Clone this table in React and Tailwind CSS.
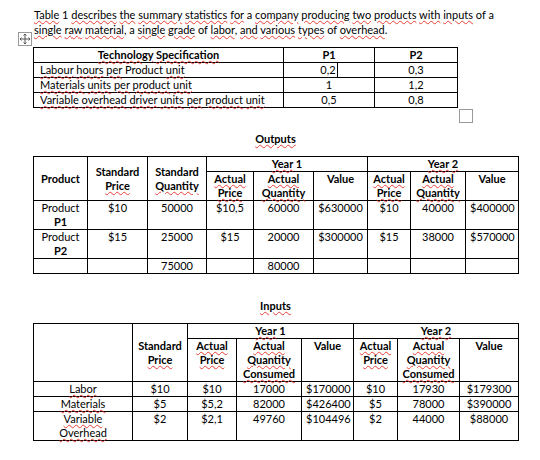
import React from "react";

// words Word's spell checker did not flag
const OK = new Set(["1", "a", "of", "Product", "Standard", "Value", "P1", "P2"]);

function Sp({ t }) {
  return t.split(/(\s+|[.,])/).map((w, i) => {
    if (!w || /^\s+$/.test(w) || /^[.,]$/.test(w) || OK.has(w)) return w;
    return (
      <span
        key={i}
        className="underline decoration-wavy decoration-[#e8403a] decoration-1 underline-offset-[1px]"
      >
        {w}
      </span>
    );
  });
}

const td = "border border-black p-0 px-[4px] leading-[14px] align-top text-center whitespace-nowrap";
const th = "border border-black p-0 px-[2px] leading-[14px] font-bold text-center whitespace-nowrap";

function MoveHandle() {
  return (
    <div className="absolute left-[-15px] top-[-15px] w-[14px] h-[14px] border border-[#9a9a9a] bg-white flex items-center justify-center">
      <svg width="12" height="12" viewBox="0 0 12 12" fill="none" stroke="#555" strokeWidth="1">
        <path d="M6 1v10M1 6h10" />
        <path d="M4.5 2.5L6 1l1.5 1.5M4.5 9.5L6 11l1.5-1.5M2.5 4.5L1 6l1.5 1.5M9.5 4.5L11 6l-1.5 1.5" />
      </svg>
    </div>
  );
}

function Outputs() {
  const rows = [
    ["P1", "$10", "50000", "$10,5", "60000", "$630000", "$10", "40000", "$400000"],
    ["P2", "$15", "25000", "$15", "20000", "$300000", "$15", "38000", "$570000"],
  ];
  return (
    <table className="ml-[33px] w-[485px] table-fixed border-collapse">
      <colgroup>
        <col className="w-[54px]" />
        <col className="w-[60px]" />
        <col className="w-[59px]" />
        <col className="w-[47px]" />
        <col className="w-[60px]" />
        <col className="w-[54px]" />
        <col className="w-[43px]" />
        <col className="w-[55px]" />
        <col className="w-[53px]" />
      </colgroup>
      <thead>
        <tr>
          <th rowSpan={2} className={th + " align-middle"}>Product</th>
          <th rowSpan={2} className={th + " align-middle"}>
            Standard<br />
            <Sp t="Price" />
          </th>
          <th rowSpan={2} className={th + " align-middle"}>
            Standard<br />
            <Sp t="Quantity" />
          </th>
          <th colSpan={3} className={th}>
            <Sp t="Year 1" />
          </th>
          <th colSpan={3} className={th}>
            <Sp t="Year 2" />
          </th>
        </tr>
        <tr>
          {[0, 1].map((k) => (
            <React.Fragment key={k}>
              <th className={th + " align-top"}>
                <Sp t="Actual" />
                <br />
                <Sp t="Price" />
              </th>
              <th className={th + " align-top"}>
                <Sp t="Actual" />
                <br />
                <Sp t="Quantity" />
              </th>
              <th className={th + " align-top"}>Value</th>
            </React.Fragment>
          ))}
        </tr>
      </thead>
      <tbody>
        {rows.map((r) => (
          <tr key={r[0]}>
            <td className={td}>
              Product
              <br />
              <b>{r[0]}</b>
            </td>
            {r.slice(1).map((v, i) => (
              <td key={i} className={td}>
                {v}
              </td>
            ))}
          </tr>
        ))}
        <tr>
          <td className={td}>&nbsp;</td>
          <td className={td}></td>
          <td className={td}>75000</td>
          <td className={td}></td>
          <td className={td}>80000</td>
          <td className={td}></td>
          <td className={td}></td>
          <td className={td}></td>
          <td className={td}></td>
        </tr>
      </tbody>
    </table>
  );
}

function Inputs() {
  const rows = [
    [["Labor"], "$10", "$10", "17000", "$170000", "$10", "17930", "$179300"],
    [["Materials"], "$5", "$5,2", "82000", "$426400", "$5", "78000", "$390000"],
    [["Variable", "Overhead"], "$2", "$2,1", "49760", "$104496", "$2", "44000", "$88000"],
  ];
  return (
    <table className="ml-[33px] w-[485px] table-fixed border-collapse">
      <colgroup>
        <col className="w-[99px]" />
        <col className="w-[55px]" />
        <col className="w-[49px]" />
        <col className="w-[65px]" />
        <col className="w-[52px]" />
        <col className="w-[44px]" />
        <col className="w-[62px]" />
        <col className="w-[59px]" />
      </colgroup>
      <thead>
        <tr>
          <th rowSpan={2} className={th}></th>
          <th rowSpan={2} className={th + " align-middle"}>
            Standard<br />
            <Sp t="Price" />
          </th>
          <th colSpan={3} className={th}>
            <Sp t="Year 1" />
          </th>
          <th colSpan={3} className={th}>
            <Sp t="Year 2" />
          </th>
        </tr>
        <tr>
          {[0, 1].map((k) => (
            <React.Fragment key={k}>
              <th className={th + " align-top"}>
                <Sp t="Actual" />
                <br />
                <Sp t="Price" />
              </th>
              <th className={th + " align-top"}>
                <Sp t="Actual" />
                <br />
                <Sp t="Quantity" />
                <br />
                <Sp t="Consumed" />
              </th>
              <th className={th + " align-top"}>Value</th>
            </React.Fragment>
          ))}
        </tr>
      </thead>
      <tbody>
        {rows.map((r, n) => (
          <tr key={n}>
            <td className={td}>
              {r[0].map((w, i) => (
                <React.Fragment key={w}>
                  {i > 0 && <br />}
                  <Sp t={w} />
                </React.Fragment>
              ))}
            </td>
            {r.slice(1).map((v, i) => (
              <td key={i} className={td}>
                {v}
              </td>
            ))}
          </tr>
        ))}
      </tbody>
    </table>
  );
}

export default function App() {
  return (
    <div className="w-[540px] h-[460px] overflow-hidden bg-white text-black text-[11px] font-[Lato,sans-serif]">
      <p className="pl-[34px] pt-[7px] leading-[15px]">
        <Sp t="Table 1 describes the summary statistics for a company producing two products with inputs of a" />
        <br />
        <Sp t="single raw material, a single grade of labor, and various types of overhead." />
      </p>

      <div className="relative ml-[33px] mt-[10px] w-[424px]">
        <MoveHandle />
        <table className="w-[424px] table-fixed border-collapse">
          <colgroup>
            <col className="w-[250px]" />
            <col className="w-[91px]" />
            <col className="w-[83px]" />
          </colgroup>
          <thead>
            <tr>
              <th className={th}>
                <Sp t="Technology Specification" />
              </th>
              <th className={th}>P1</th>
              <th className={th}>P2</th>
            </tr>
          </thead>
          <tbody>
            <tr>
              <td className={td + " text-left px-[6px]"}>
                <Sp t="Labour hours per Product unit" />
              </td>
              <td className={td}>
                <span className="inline-block border-r border-black pr-[1px]">0,2</span>
              </td>
              <td className={td}>0,3</td>
            </tr>
            <tr>
              <td className={td + " text-left px-[6px]"}>
                <Sp t="Materials units per product unit" />
              </td>
              <td className={td}>1</td>
              <td className={td}>1,2</td>
            </tr>
            <tr>
              <td className={td + " text-left px-[6px]"}>
                <Sp t="Variable overhead driver units per product unit" />
              </td>
              <td className={td}>0,5</td>
              <td className={td}>0,8</td>
            </tr>
          </tbody>
        </table>
        <div className="absolute left-[426px] top-full mt-[1px] w-[14px] h-[14px] border border-[#9a9a9a] bg-white" />
      </div>

      <p className="ml-[33px] w-[485px] mt-[24px] mb-[10px] text-center font-bold leading-[14px]">
        <Sp t="Outputs" />
      </p>
      <Outputs />

      <p className="ml-[33px] w-[485px] mt-[25px] mb-[10px] text-center font-bold leading-[14px]">
        <Sp t="Inputs" />
      </p>
      <Inputs />
    </div>
  );
}
